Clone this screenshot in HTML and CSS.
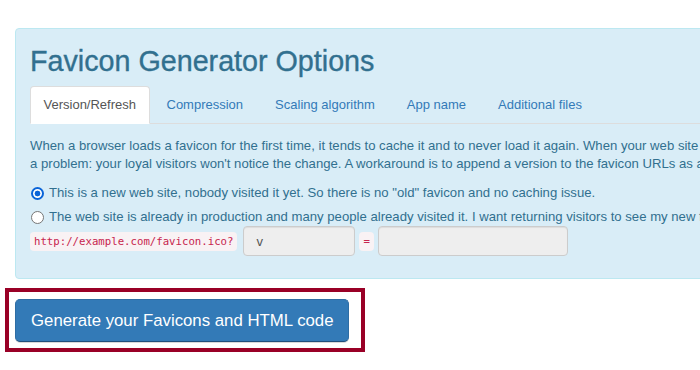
FILE: index.html
```html
<!DOCTYPE html>
<html lang="en">
<head>
<meta charset="utf-8">
<title>Favicon Generator Options</title>
<link rel="stylesheet" href="styles.css">
</head>
<body>
<div class="page">
  <section class="panel">
    <h1 class="title">Favicon Generator Options</h1>
    <ul class="tabs">
      <li class="tab active"><a>Version/Refresh</a></li>
      <li class="tab"><a>Compression</a></li>
      <li class="tab"><a>Scaling algorithm</a></li>
      <li class="tab"><a>App name</a></li>
      <li class="tab"><a>Additional files</a></li>
    </ul>
    <div class="tab-content">
      <p class="intro">When a browser loads a favicon for the first time, it tends to cache it and to never load it again. When your web site already has a favicon and you change it, this is<br>a problem: your loyal visitors won't notice the change. A workaround is to append a version to the favicon URLs as a query string, so browsers load the new icons.</p>
      <label class="option"><input type="radio" name="ver" class="radio" checked><span>This is a new web site, nobody visited it yet. So there is no "old" favicon and no caching issue.</span></label>
      <label class="option"><input type="radio" name="ver" class="radio"><span>The web site is already in production and many people already visited it. I want returning visitors to see my new favicon.</span></label>
      <div class="version-row">
        <code class="code">http://example.com/favicon.ico?</code>
        <input class="field field-key" type="text" value="v">
        <code class="code code-eq">=</code>
        <input class="field field-value" type="text" value="">
      </div>
    </div>
  </section>
  <div class="highlight">
    <button class="generate" type="button">Generate your Favicons and HTML code</button>
  </div>
</div>
</body>
</html>
```
FILE: styles.css
```css
html, body {
  margin: 0;
  padding: 0;
  background: #fff;
  overflow: hidden;
}

body {
  width: 700px;
  height: 370px;
  font-family: "Liberation Sans", Arial, sans-serif;
  font-size: 13.15px;
  line-height: 18px;
}

.page {
  padding: 28px 0 0 15px;
  width: 1100px;
}

.panel {
  width: 1000px;
  background: #d9edf7;
  border: 1px solid #bce8f1;
  border-radius: 4px;
  padding: 16px 14px 22px 14px;
  color: #31708f;
}

.title {
  margin: 0 0 9px 0;
  font-size: 28.7px;
  line-height: 32px;
  font-weight: normal;
  color: #31708f;
  -webkit-text-stroke: 0.35px #31708f;
}

.tabs {
  list-style: none;
  margin: 0;
  padding: 0;
  display: flex;
  border-bottom: 1px solid #ddd;
  font-size: 13px;
}

.tab {
  margin: 0 2px -1px 0;
}

.tab a {
  display: block;
  padding: 9px 14px;
  border: 1px solid transparent;
  border-radius: 4px 4px 0 0;
  color: #337ab7;
  line-height: 18px;
  white-space: nowrap;
}

.tab.active a {
  padding: 9px 12.5px;
  background: #fff;
  border-color: #ddd;
  border-bottom-color: transparent;
  color: #555;
}

.tab-content {
  padding-top: 13px;
}

.intro {
  margin: 0 0 11px 0;
  white-space: nowrap;
}

.option {
  display: flex;
  align-items: center;
  gap: 5px;
  white-space: nowrap;
  margin-bottom: 6px;
}

.option + .option {
  margin-bottom: 0;
}

.radio {
  appearance: none;
  -webkit-appearance: none;
  margin: 0 0 0 1px;
  width: 13px;
  height: 13px;
  border: 1.5px solid #767676;
  border-radius: 50%;
  background: #fff;
  flex: none;
}

.radio:checked {
  border: 2px solid #0a64d8;
  background: radial-gradient(circle, #0a64d8 0 2.6px, #fff 3.2px);
}

.version-row {
  display: flex;
  align-items: center;
  gap: 4px;
}

.code {
  font-family: "DejaVu Sans Mono", "Liberation Mono", monospace;
  font-size: 10.7px;
  line-height: 15px;
  color: #c7254e;
  background: #f9f2f4;
  border-radius: 4px;
  padding: 2px 4px;
}

.field {
  box-sizing: border-box;
  height: 30px;
  border: 1px solid #ccc;
  border-radius: 4px;
  background: #eee;
  color: #555;
  font-family: "Liberation Sans", Arial, sans-serif;
  font-size: 13px;
  padding: 0 12px;
  margin: 0;
  box-shadow: inset 0 1px 1px rgba(0, 0, 0, 0.075);
}

.field-key {
  width: 112px;
  margin-left: 2px;
}

.field-value {
  width: 190px;
}

.highlight {
  display: inline-block;
  margin: 9px 0 0 -10px;
  border: 4px solid #990026;
  padding: 7px 12px 6px 6px;
}

.generate {
  display: block;
  box-sizing: border-box;
  width: 334px;
  height: 43px;
  background: #337ab7;
  border: 1px solid #2e6da4;
  border-bottom-color: #1f4f7d;
  border-radius: 5px;
  color: #fff;
  font-family: "Liberation Sans", Arial, sans-serif;
  font-size: 16.8px;
  padding: 0 15px;
  text-align: left;
  white-space: nowrap;
  box-shadow: 0 1px 0 rgba(0, 0, 0, 0.15);
}
```
